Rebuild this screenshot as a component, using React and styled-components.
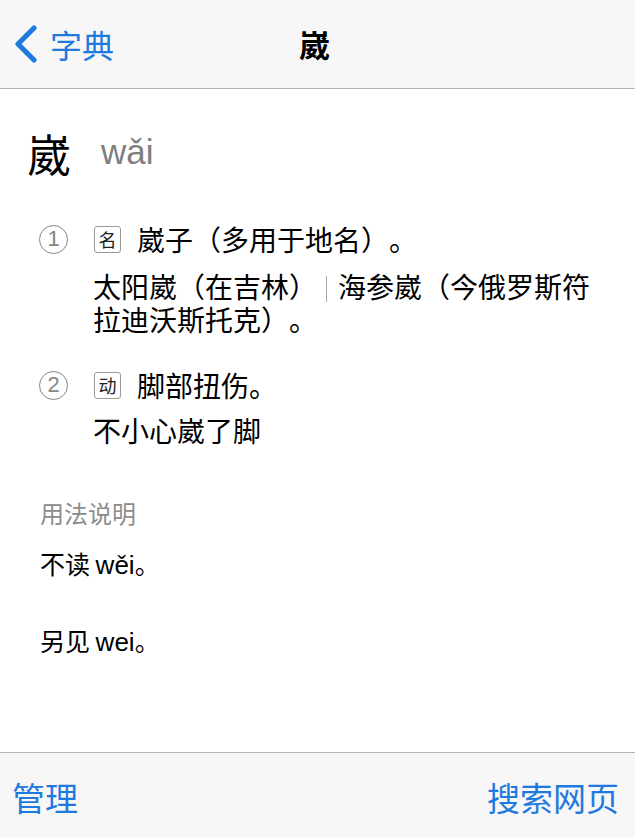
import React from "react";
import styled, { createGlobalStyle } from "styled-components";

const CJK = `"Noto Sans CJK SC", "Noto Sans", sans-serif`;
const LATIN = `"Liberation Sans", "Noto Sans CJK SC", sans-serif`;
const BLUE = "#1f7ae0";

const Global = createGlobalStyle`
  html, body { margin: 0; padding: 0; background: #ffffff; }
  body { font-family: ${CJK}; color: #000; text-spacing-trim: space-all; }
  #root { width: 635px; height: 838px; }
`;

const Screen = styled.div`
  width: 635px;
  height: 838px;
  display: flex;
  flex-direction: column;
  background: #fff;
  overflow: hidden;
`;

const NavBar = styled.header`
  height: 88px;
  flex: 0 0 auto;
  background: #f7f7f7;
  border-bottom: 1px solid #b4b4b4;
  display: grid;
  grid-template-columns: 1fr auto 1fr;
  align-items: center;
  padding: 0 12px;
`;

const BackButton = styled.div`
  display: flex;
  align-items: center;
  gap: 12px;
  color: ${BLUE};
  font-family: ${CJK};
  font-size: 32px;
  line-height: 40px;
`;

const Title = styled.div`
  font-family: ${CJK};
  font-size: 31px;
  font-weight: 700;
  line-height: 40px;
  margin-left: -6px;
`;

const Content = styled.main`
  flex: 1 1 auto;
  padding: 39px 10px 0 27px;
`;

const HeadRow = styled.div`
  display: flex;
  align-items: center;
  gap: 30px;
  height: 50px;
`;

const HeadChar = styled.span`
  font-family: ${CJK};
  font-size: 44px;
  line-height: 50px;
`;

const Pinyin = styled.span`
  font-family: ${LATIN};
  font-size: 35px;
  line-height: 40px;
  color: #7f7f7f;
  margin-top: -2px;
`;

const Sense = styled.section`
  margin-top: ${(p) => p.$top}px;
  padding-left: 12px;
`;

const SenseRow = styled.div`
  display: flex;
  align-items: center;
  height: 34px;
`;

const Circle = styled.span`
  flex: 0 0 29px;
  width: 29px;
  height: 29px;
  border: 1.5px solid #858585;
  border-radius: 50%;
  display: inline-flex;
  align-items: center;
  justify-content: center;
  font-family: ${LATIN};
  font-size: 22px;
  line-height: 1;
  color: #858585;
  box-sizing: border-box;
  margin-right: 26px;
`;

const Badge = styled.span`
  flex: 0 0 27px;
  width: 27px;
  height: 27px;
  box-sizing: border-box;
  border: 1.5px solid #9a9a9a;
  border-radius: 3px;
  display: inline-flex;
  align-items: center;
  justify-content: center;
  font-family: ${CJK};
  font-size: 18px;
  line-height: 1;
  color: #222;
  margin-right: 16px;
`;

const Definition = styled.span`
  font-family: ${CJK};
  font-size: 28px;
  line-height: 34px;
`;

const Example = styled.p`
  margin: ${(p) => p.$top}px 0 0 54px;
  font-family: ${CJK};
  font-size: 28px;
  line-height: 33px;
  width: 520px;
`;

const Divider = styled.span`
  display: inline-block;
  width: 1px;
  height: 26px;
  background: #a8a8a8;
  vertical-align: -4px;
  margin: 0 11px 0 9px;
`;

const Usage = styled.section`
  margin-top: 50px;
  padding-left: 13px;
`;

const UsageTitle = styled.div`
  font-family: ${CJK};
  font-size: 24px;
  line-height: 32px;
  color: #8c8c8c;
`;

const UsageText = styled.p`
  margin: ${(p) => p.$top}px 0 0;
  font-family: ${CJK};
  font-size: 25px;
  line-height: 32px;
`;

const Latin = styled.span`
  font-family: ${LATIN};
  font-size: 26px;
`;

const Toolbar = styled.footer`
  height: 86px;
  flex: 0 0 auto;
  background: #f7f7f7;
  border-top: 1px solid #b4b4b4;
  display: flex;
  align-items: center;
  justify-content: space-between;
  padding: 2px 16px 0 12px;
  box-sizing: border-box;
`;

const ToolButton = styled.span`
  color: ${BLUE};
  font-family: ${CJK};
  font-size: 33px;
  line-height: 40px;
`;

const Chevron = () => (
  <svg width="26" height="38" viewBox="0 0 26 38">
    <path d="M22 3 L6 19 L22 35" fill="none" stroke={BLUE} strokeWidth="5.2" strokeLinecap="round" strokeLinejoin="round" />
  </svg>
);

export default function App() {
  return (
    <>
      <Global />
      <Screen>
        <NavBar>
          <BackButton>
            <Chevron />
            <span>字典</span>
          </BackButton>
          <Title>崴</Title>
          <span />
        </NavBar>
        <Content>
          <HeadRow>
            <HeadChar>崴</HeadChar>
            <Pinyin>wǎi</Pinyin>
          </HeadRow>
          <Sense $top={44}>
            <SenseRow>
              <Circle>1</Circle>
              <Badge>名</Badge>
              <Definition>崴子（多用于地名）。</Definition>
            </SenseRow>
            <Example $top={14}>
              太阳崴（在吉林）<Divider />海参崴（今俄罗斯符拉迪沃斯托克）。
            </Example>
          </Sense>
          <Sense $top={32}>
            <SenseRow>
              <Circle>2</Circle>
              <Badge>动</Badge>
              <Definition>脚部扭伤。</Definition>
            </SenseRow>
            <Example $top={12}>不小心崴了脚</Example>
          </Sense>
          <Usage>
            <UsageTitle>用法说明</UsageTitle>
            <UsageText $top={18}>
              不读 <Latin>wěi</Latin>。
            </UsageText>
            <UsageText $top={43}>
              另见 <Latin>wei</Latin>。
            </UsageText>
          </Usage>
        </Content>
        <Toolbar>
          <ToolButton>管理</ToolButton>
          <ToolButton>搜索网页</ToolButton>
        </Toolbar>
      </Screen>
    </>
  );
}
